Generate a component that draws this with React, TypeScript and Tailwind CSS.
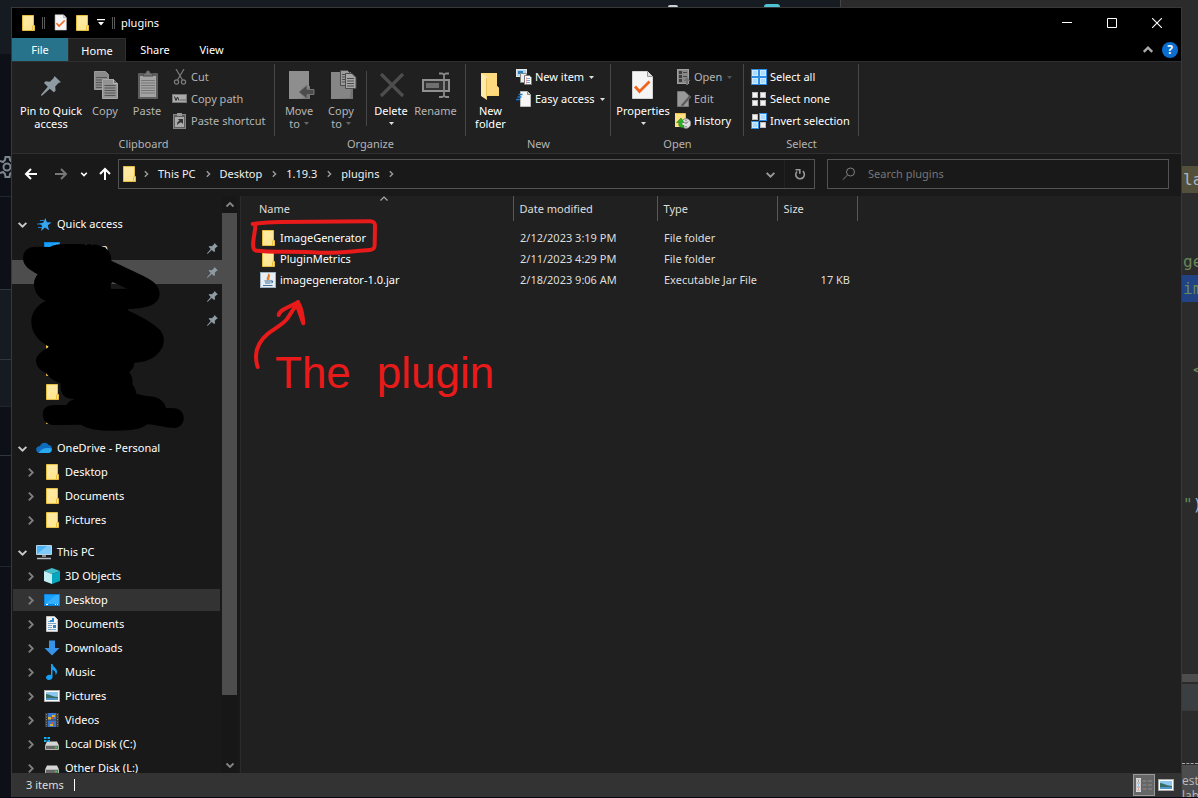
import type { ReactNode } from "react";

/* ---------- shared glyphs ---------- */

type Dir = "up" | "down" | "right";
const chevronPaths: Record<Dir, string> = {
  down: "M1.5 3.5 5 7l3.500-3.500",
  up: "M1.500 6.500 5 3l3.500 3.500",
  right: "M3.500 1.500 7 5l-3.500 3.500",
};

function Chevron({ dir, className, thick = 1.8 }: { dir: Dir; className: string; thick?: number }) {
  return (
    <svg viewBox="0 0 10 10" className={className} fill="none" stroke="currentColor" strokeWidth={thick} aria-hidden>
      <path d={chevronPaths[dir]} />
    </svg>
  );
}

function Caret({ className = "text-[#dedede]" }: { className?: string }) {
  return (
    <svg viewBox="0 0 5 3" className={`h-[3px] w-[5px] shrink-0 ${className}`} fill="currentColor" aria-hidden>
      <path d="M0 0h5L2.500 3z" />
    </svg>
  );
}

function Folder() {
  return (
    <svg viewBox="0 0 16 16" className="size-4 shrink-0" aria-hidden>
      <path d="M2.500.5h11v10h1v5h-12z" fill="#ffe694" stroke="#e8be42" />
      <path d="M3 1h10v5L3 13z" fill="#ffeba6" opacity=".6" />
      <path d="M12.500 15.500v-4.500l1.200-1" fill="none" stroke="#e8be42" />
    </svg>
  );
}

function Pin({ className }: { className: string }) {
  return (
    <svg viewBox="0 0 20 20" className={className} fill="#8f9ba3" aria-hidden>
      <path d="M13.500 0 20 6.300l-2.200.5-3.600 3.600.4 4.400-1.800 1.500-4-3.600L1.200 19.600 0 19.800l.2-1.300 6.600-7.700L3 7l1.600-1.700 4.300.4 3.800-3.600z" />
    </svg>
  );
}

function SheetLines({ x, y, w, n, color }: { x: number; y: number; w: number; n: number; color: string }) {
  return (
    <g stroke={color} strokeWidth="1">
      {Array.from({ length: n }, (_, i) => (
        <path key={i} d={`M${x} ${y + i * 2.5}h${w}`} />
      ))}
    </g>
  );
}

/* ---------- ribbon icons ---------- */

const CopyIcon = () => (
  <svg viewBox="0 0 32 32" className="size-8" aria-hidden>
    <path d="M5.500 1.500h11l3 3v15h-14z" fill="#8a8a8a" stroke="#9a9a9a" />
    <SheetLines x={7} y={7.500} w={11} n={5} color="#555" />
    <path d="M13.500 9.500h11l4 4v15h-15z" fill="#939393" stroke="#a8a8a8" />
    <path d="M24.500 9.500v4h4" fill="#666" stroke="#bbb" />
    <SheetLines x={15.500} y={15.500} w={11} n={5} color="#555" />
  </svg>
);

const PasteIcon = () => (
  <svg viewBox="0 0 32 32" className="size-8" aria-hidden>
    <rect x="7" y="3" width="20" height="26" rx="1" fill="#5e5e5e" />
    <rect x="9" y="6" width="16" height="21" fill="#a3a3a3" />
    <path d="M12 6V4l3-1c0-3 4-3 4 0l3 1v2z" fill="#777" stroke="#4a4a4a" />
    <SheetLines x={10} y={10.500} w={14} n={6} color="#777" />
  </svg>
);

const CutIcon = () => (
  <svg viewBox="0 0 16 16" className="size-4" fill="none" stroke="#7d7d7d" strokeWidth="1.200" aria-hidden>
    <path d="M4 0 10.500 11M12 0 5.500 11" />
    <circle cx="4.500" cy="13" r="2.100" />
    <circle cx="11.500" cy="13" r="2.100" />
  </svg>
);

const CopyPathIcon = () => (
  <svg viewBox="0 0 16 16" className="size-4" aria-hidden>
    <rect x=".5" y="3.500" width="14" height="8" fill="#aaa" stroke="#777" />
    <path d="m2.500 5.500 1.500 4L5.500 6 7 9.500" stroke="#222" fill="none" />
    <path d="M8.500 9h1m1 0h1m1 0h1" stroke="#222" />
  </svg>
);

const PasteShortcutIcon = () => (
  <svg viewBox="0 0 16 16" className="size-4" aria-hidden>
    <rect x="1.500" y="1.500" width="12" height="14" fill="#5e5e5e" stroke="#858585" />
    <rect x="3" y="4" width="9" height="10" fill="#aaa" />
    <rect x="5" y="0" width="5" height="3" fill="#999" />
    <path d="M5 12c0-3 1-4 2.500-4L6 6h5v5L9.500 9.500C8 9.500 7 10 5 12z" fill="#333" />
  </svg>
);

const MoveToIcon = () => (
  <svg viewBox="0 0 32 32" className="size-8" aria-hidden>
    <path d="M6 1h20v28H6z" fill="#8e8e8e" />
    <path d="M26 16h1v13H10l13-1z" fill="#777" />
    <path d="m16 22 8-7v4.500h7v5h-7V29z" fill="#4c4c4c" stroke="#767676" />
  </svg>
);

const CopyToIcon = () => (
  <svg viewBox="0 0 32 32" className="size-8" aria-hidden>
    <path d="M6 2h20v27H6z" fill="#858585" />
    <path d="M26 18h2v11H11l14-1z" fill="#737373" />
    <path d="M15.500.5h7l3 3v12h-10z" fill="#9b9b9b" stroke="#4c4c4c" />
    <path d="M20.500 3.500h6.500l4 4v11h-10.500z" fill="#a6a6a6" stroke="#4c4c4c" />
    <SheetLines x={22} y={8.500} w={7} n={4} color="#4c4c4c" />
    <SheetLines x={17} y={4.500} w={3} n={4} color="#4c4c4c" />
  </svg>
);

const DeleteIcon = () => (
  <svg viewBox="0 0 32 32" className="size-8" stroke="#4d4d4d" strokeWidth="3.200" aria-hidden>
    <path d="m6 4 22 22M28 4 6 26" />
  </svg>
);

const RenameIcon = () => (
  <svg viewBox="0 0 32 32" className="size-8" fill="none" aria-hidden>
    <rect x="3" y="10" width="26" height="11" fill="#333" stroke="#909090" strokeWidth="2" />
    <rect x="6" y="13" width="13" height="5" fill="#707070" />
    <path d="M19 3.500h3l2 1 2-1h3M24 4v22M19 27h3l2-1 2 1h3" stroke="#8a8a8a" strokeWidth="1.800" />
  </svg>
);

const NewFolderIcon = () => (
  <svg viewBox="0 0 32 32" className="size-8" aria-hidden>
    <path d="M6 3h16v13l2 2v8H6z" fill="#fcd56f" />
    <path d="M8 3h14v13l2 2v6l-16 2z" fill="#ffdb80" />
    <path d="m6 3 6 4v23l-6-4z" fill="#ffeaaa" />
    <path d="M11.500 8v21" stroke="#e5b94e" strokeWidth=".8" fill="none" />
  </svg>
);

const NewItemIcon = () => (
  <svg viewBox="0 0 16 16" className="size-4" aria-hidden>
    <rect x=".5" y=".5" width="10" height="7" fill="#a7d7f5" stroke="#e5e5e5" />
    <rect x="2" y="2" width="5" height="3" fill="#2b7cb8" />
    <path d="M4.500 4.500h6v9h-6z" fill="#eee" stroke="#888" />
    <path d="M8.500 6.500h5l2 2v7h-7z" fill="#fff" stroke="#777" />
    <path d="M10 9.500h4m-4 2h4m-4 2h4" stroke="#7ea6cf" />
    <path d="M10.500 8v7" stroke="#e9a0a0" strokeWidth=".7" />
  </svg>
);

const EasyAccessIcon = () => (
  <svg viewBox="0 0 16 16" className="size-4" aria-hidden>
    <path d="M4.500.5h7l3 3v12h-10z" fill="#f5f5f5" stroke="#bbb" />
    <path d="M11.500.5v3h3" fill="#ccc" stroke="#888" />
    <path d="M2.500 3.500h4m-5 2.500h4m-5.500 2.500h4" stroke="#1a79c9" strokeWidth="1.300" />
  </svg>
);

function PropertiesIcon({ className = "size-8" }: { className?: string }) {
  return (
    <svg viewBox="0 0 32 32" className={className} aria-hidden>
      <path d="M5.500 1.500h15l5 5v22h-20z" fill="#f5f5f5" stroke="#d4d4d4" />
      <path d="M20.500 1.500v5h5" fill="#ddd" stroke="#999" />
      <path d="m8 16.500 4.500 5L22.500 11.500" fill="none" stroke="#f1641e" strokeWidth="2.800" />
    </svg>
  );
}

const OpenIcon = () => (
  <svg viewBox="0 0 16 16" className="size-4" aria-hidden>
    <rect x="2.500" y=".5" width="11" height="14" fill="#888" stroke="#a0a0a0" />
    <path d="M4 2h3v3H4zm0 4h3v3H4zm0 4h3v3H4z" fill="#3d3d3d" />
    <path d="M8 3.500h4M8 7.500h4" stroke="#444" />
    <path d="m8.500 12 3.500-4 3.500 4H13v4h-2v-4z" fill="#707070" />
  </svg>
);

const EditIcon = () => (
  <svg viewBox="0 0 16 16" className="size-4" aria-hidden>
    <path d="M2.500.5h7l4 3.500v11.500h-11z" fill="#999" stroke="#777" />
    <path d="m14.500 4.500 1.500 1.500-7.500 8.500L6 16l.5-2.500z" fill="#565656" stroke="#7d7d7d" strokeWidth=".5" />
  </svg>
);

const HistoryIcon = () => (
  <svg viewBox="0 0 16 16" className="size-4" aria-hidden>
    <path d="M0 0h10v14H0z" fill="#ffe083" />
    <path d="M.5.5h10v6" stroke="#e7be4d" fill="none" />
    <circle cx="11" cy="10.500" r="4.800" fill="#dedede" stroke="#888" />
    <path d="m9.500 9 1.500 1.500L13 8.500M11 7v1m0 5v1" stroke="#555" fill="none" />
    <path d="M9 14.500C4 15 3 12 4 9.500H1.500L6 5l3 4.500H7c-.5 1.500 0 3 2 3z" fill="#2fae2c" stroke="#167a14" strokeWidth=".5" />
  </svg>
);

function SelectIcon({ on }: { on: boolean[] }) {
  const cells = [
    [0, 0],
    [8, 0],
    [0, 8],
    [8, 8],
  ];
  return (
    <svg viewBox="0 0 16 16" className="size-4" aria-hidden>
      {cells.map(([x, y], i) => (
        <g key={i}>
          {on[i] && <rect x={x} y={y} width="8" height="8" fill="#2f8de4" />}
          <rect x={x + 1.5} y={y + 1.5} width="5" height="5" fill={on[i] ? "#a9dcff" : "#f2f2f2"} stroke={on[i] ? "#cdeaff" : "#bcbcbc"} />
        </g>
      ))}
    </svg>
  );
}

/* ---------- ribbon building blocks ---------- */

function Group({ label, className, pad, children }: { label: string; className: string; pad: string; children: ReactNode }) {
  return (
    <section className={`relative flex flex-col pt-1 ${className}`}>
      <div className={`flex h-[66px] ${pad}`}>{children}</div>
      <h2 className="mt-1 text-center text-[#b4b4b4]">{label}</h2>
      <span className="absolute top-[2px] right-0 h-[72px] w-px bg-[#484848]" />
    </section>
  );
}

type Tone = "on" | "dim";

function BigButton({ icon, lines, width, tone = "on", caret }: { icon: ReactNode; lines: string[]; width: string; tone?: Tone; caret?: "inline" | "below" }) {
  return (
    <button className={`flex shrink-0 flex-col items-center pt-1 leading-[13px] whitespace-nowrap ${width} ${tone === "on" ? "text-white" : "text-[#b5b5b5]"}`}>
      <span className="mb-[2px] flex size-8 items-center justify-center">{icon}</span>
      {lines.map((l, i) => (
        <span key={l} className="flex items-center gap-1">
          {l}
          {caret === "inline" && i === lines.length - 1 && <Caret className="text-[#666]" />}
        </span>
      ))}
      {caret === "below" && (
        <span className="mt-[5px]">
          <Caret />
        </span>
      )}
    </button>
  );
}

function SmallButton({ icon, label, tone = "on", caret }: { icon: ReactNode; label: string; tone?: Tone; caret?: string }) {
  return (
    <button className={`flex h-[22px] items-center gap-[3px] whitespace-nowrap ${tone === "on" ? "text-white" : "text-[#b5b5b5]"}`}>
      {icon}
      <span>{label}</span>
      {caret && (
        <span className="ml-[2px]">
          <Caret className={caret} />
        </span>
      )}
    </button>
  );
}

function Ribbon() {
  return (
    <div className="flex h-[93px] shrink-0 border-y border-[#2f2f2f] bg-[#202020]">
      <Group label="Clipboard" className="w-[263px]" pad="pl-[6px]">
        <BigButton icon={<Pin className="size-5" />} lines={["Pin to Quick", "access"]} width="w-[66px]" />
        <BigButton icon={<CopyIcon />} lines={["Copy"]} width="w-[42px]" tone="dim" />
        <BigButton icon={<PasteIcon />} lines={["Paste"]} width="w-[42px]" tone="dim" />
        <div className="ml-1">
          <SmallButton icon={<CutIcon />} label="Cut" tone="dim" />
          <SmallButton icon={<CopyPathIcon />} label="Copy path" tone="dim" />
          <SmallButton icon={<PasteShortcutIcon />} label="Paste shortcut" tone="dim" />
        </div>
      </Group>
      <Group label="Organize" className="w-[191px]" pad="pl-[3px]">
        <BigButton icon={<MoveToIcon />} lines={["Move", "to"]} width="w-[42px]" tone="dim" caret="inline" />
        <BigButton icon={<CopyToIcon />} lines={["Copy", "to"]} width="w-[42px]" tone="dim" caret="inline" />
        <span className="mx-[4px] mt-[5px] h-[55px] w-px bg-[#484848]" />
        <BigButton icon={<DeleteIcon />} lines={["Delete"]} width="w-[40px]" caret="below" />
        <BigButton icon={<RenameIcon />} lines={["Rename"]} width="w-[49px]" tone="dim" />
      </Group>
      <Group label="New" className="w-[145px]" pad="pl-[3px]">
        <BigButton icon={<NewFolderIcon />} lines={["New", "folder"]} width="w-[43px]" />
        <div className="ml-1">
          <SmallButton icon={<NewItemIcon />} label="New item" caret="text-[#dedede]" />
          <SmallButton icon={<EasyAccessIcon />} label="Easy access" caret="text-[#dedede]" />
        </div>
      </Group>
      <Group label="Open" className="w-[133px]" pad="pl-[2px]">
        <BigButton icon={<PropertiesIcon />} lines={["Properties"]} width="w-[60px]" caret="below" />
        <div className="ml-[2px]">
          <SmallButton icon={<OpenIcon />} label="Open" tone="dim" caret="text-[#555]" />
          <SmallButton icon={<EditIcon />} label="Edit" tone="dim" />
          <SmallButton icon={<HistoryIcon />} label="History" />
        </div>
      </Group>
      <Group label="Select" className="w-[115px]" pad="pl-[7px]">
        <div>
          <SmallButton icon={<SelectIcon on={[true, true, true, true]} />} label="Select all" />
          <SmallButton icon={<SelectIcon on={[false, false, false, false]} />} label="Select none" />
          <SmallButton icon={<SelectIcon on={[false, true, true, false]} />} label="Invert selection" />
        </div>
      </Group>
    </div>
  );
}

/* ---------- title bar and tabs ---------- */

function TitleBar() {
  return (
    <header className="flex h-[30px] shrink-0 items-center bg-black pr-px pl-2 text-white">
      <Folder />
      <span className="ml-[6px] h-3 w-[3px] border-x border-[#5a5a5a]" />
      <button aria-label="Properties" className="ml-[7px]">
        <PropertiesIcon className="size-[18px]" />
      </button>
      <button aria-label="New folder" className="ml-[4px]">
        <Folder />
      </button>
      <button aria-label="Customize Quick Access Toolbar" className="ml-[6px] flex size-[9px] flex-col items-center">
        <svg viewBox="0 0 8 7" className="h-[7px] w-2" fill="currentColor" aria-hidden>
          <path d="M0 0h8v1.200H0zM1 3h6L4 6.500z" />
        </svg>
      </button>
      <span className="ml-[7px] h-3 w-[3px] border-x border-[#5a5a5a]" />
      <h1 className="ml-[6px]">plugins</h1>
      <div className="ml-auto flex">
        <button aria-label="Minimize" className="flex h-[30px] w-[45px] items-center justify-center">
          <svg viewBox="0 0 10 10" className="size-[10px]" stroke="#fff" aria-hidden>
            <path d="M0 4.500h10" />
          </svg>
        </button>
        <button aria-label="Maximize" className="flex h-[30px] w-[45px] items-center justify-center">
          <svg viewBox="0 0 10 10" className="size-[10px]" stroke="#fff" fill="none" aria-hidden>
            <path d="M.5.5h9v9h-9z" />
          </svg>
        </button>
        <button aria-label="Close" className="flex h-[30px] w-[46px] items-center justify-center">
          <svg viewBox="0 0 10 10" className="size-[10px]" stroke="#fff" strokeWidth="1.100" aria-hidden>
            <path d="m0 0 10 10M10 0 0 10" />
          </svg>
        </button>
      </div>
    </header>
  );
}

function Tabs() {
  return (
    <nav className="flex h-[23px] shrink-0 items-stretch bg-black text-white">
      <button className="w-14 bg-[#27738b]">File</button>
      <button className="-mb-px w-[58px] border-x border-t border-[#2f2f2f] bg-[#202020]">Home</button>
      <button className="w-[58px]">Share</button>
      <button className="w-[55px]">View</button>
      <div className="ml-auto flex items-center gap-2 pr-[3px]">
        <button aria-label="Minimize the Ribbon">
          <Chevron dir="up" className="size-3 text-[#aaa]" thick={2} />
        </button>
        <button aria-label="Help" className="size-4 rounded-full bg-[#0a6fd0] text-[12px] leading-4 font-bold">
          ?
        </button>
      </div>
    </nav>
  );
}

/* ---------- address row ---------- */

function Arrow({ d, color }: { d: string; color: string }) {
  return (
    <svg viewBox="0 0 14 14" className="size-[14px]" fill="none" stroke={color} strokeWidth="2" aria-hidden>
      <path d={d} />
    </svg>
  );
}

function AddressRow() {
  return (
    <div className="flex h-[42px] shrink-0 items-start bg-[#191919] pt-[5px] pr-3">
      <div className="flex h-[30px] w-[106px] shrink-0 items-center pl-3">
        <button aria-label="Back">
          <Arrow d="M13 7H2m5-5L2 7l5 5" color="#fff" />
        </button>
        <button aria-label="Forward" className="ml-4">
          <Arrow d="M1 7h11M7 2l5 5-5 5" color="#777" />
        </button>
        <button aria-label="Recent locations" className="ml-3">
          <Chevron dir="down" className="size-2 text-white" thick={2} />
        </button>
        <button aria-label="Up" className="ml-[10px]">
          <Arrow d="M7 13V2M2 7l5-5 5 5" color="#fff" />
        </button>
      </div>
      <div className="flex h-[30px] min-w-0 flex-1 items-center border border-[#535353] pl-[2px] text-[#f0f0f0]">
        <Folder />
        <ol className="-ml-[3px] flex">
          {["This PC", "Desktop", "1.19.3", "plugins"].map((c) => (
            <li key={c} className="flex items-center">
              <Chevron dir="right" className="mx-2 size-2 text-[#999]" />
              <button>{c}</button>
            </li>
          ))}
        </ol>
        <Chevron dir="right" className="ml-2 size-2 text-[#999]" />
        <button aria-label="Previous locations" className="ml-auto flex w-7 justify-center">
          <Chevron dir="down" className="size-[11px] text-[#999]" />
        </button>
        <button aria-label="Refresh" className="flex h-full w-[30px] items-center justify-center border-l border-[#222]">
          <svg viewBox="0 0 12 12" className="size-3" fill="none" stroke="#999" strokeWidth="1.600" aria-hidden>
            <path d="M8.800 3.200A4.300 4.300 0 1 1 3 3.500" />
            <path d="M1.500 1.800h4.300v4" />
          </svg>
        </button>
      </div>
      <label className="ml-3 flex h-[30px] w-[342px] shrink-0 items-center border border-[#535353] pl-[14px]">
        <svg viewBox="0 0 14 14" className="size-[14px]" fill="none" stroke="#808080" aria-hidden>
          <circle cx="8.500" cy="5" r="4" />
          <path d="M5.500 8 .8 12.700" />
        </svg>
        <input aria-label="Search plugins" placeholder="Search plugins" className="ml-3 min-w-0 flex-1 bg-transparent outline-none placeholder:text-[#767676]" />
      </label>
    </div>
  );
}

/* ---------- navigation pane ---------- */

const ico = "size-4 shrink-0";

const StarIcon = () => (
  <svg viewBox="0 0 16 16" className={ico} aria-hidden>
    <path d="m9.500 2 1.300 4.200 4.700.3-3.700 2.800 1.200 5L9 11.500 5 15l1.300-5L3 7.300l4.200-.5z" fill="#35a8f4" />
    <path d="M4 4.500h4M1 8h5M2 11.500h4" stroke="#1c7fd0" />
  </svg>
);
const DesktopIcon = () => (
  <svg viewBox="0 0 16 16" className={ico} aria-hidden>
    <rect y="2" width="16" height="12" fill="#0b84e0" />
    <path d="M1 3h14v9H1z" fill="#18a0fb" />
    <path d="M1 12 12 3h3v9z" fill="#35b0ff" />
    <path d="M2 12.500h2m7 0h1m1 0h1" stroke="#fff" />
  </svg>
);
const CloudIcon = () => (
  <svg viewBox="0 0 16 16" className={ico} aria-hidden>
    <path d="M4 6c1-4 7-4.500 8.500-1 2.500 0 3.500 2 3.500 4 0 3-2 4-4 4H4C1 13-.3 10.500.3 8.500.8 7 2.500 6 4 6z" fill="#0f6cbd" />
    <path d="M2.500 13C5 9 9 7 15.500 8.500 16.500 11 14.500 13 12 13z" fill="#29a8ee" />
  </svg>
);
const PcIcon = () => (
  <svg viewBox="0 0 16 16" className={ico} aria-hidden>
    <path d="M.5 1.500h15v9H.5z" fill="#49b1f5" stroke="#b9d5e5" />
    <path d="M1 10 11 2h4v8z" fill="#80cafa" />
    <path d="M6 11h4v2H6z" fill="#888" />
    <path d="M1 14.500h14" stroke="#b5bec4" strokeWidth="1.500" />
  </svg>
);
const CubeIcon = () => (
  <svg viewBox="0 0 16 16" className={ico} aria-hidden>
    <path d="m8 0 8 3-8 3-8-3z" fill="#42bcca" />
    <path d="m0 3 8 3v10l-8-3z" fill="#c1eff4" />
    <path d="m16 3-8 3v10l8-3z" fill="#06a6bf" />
  </svg>
);
const DocumentIcon = () => (
  <svg viewBox="0 0 16 16" className={ico} aria-hidden>
    <path d="M2.500.5h8l3 3v12h-11z" fill="#f4f4f4" stroke="#c2c2c2" />
    <path d="M4 5.500h2M4 7.500h8m-8 2h4m-4 2h4m-4 2h8" stroke="#7ba7c9" />
    <path d="M6 4h2v2H6zm2-2h2v4H8zm1 7h3v3H9z" fill="#2b88d0" />
  </svg>
);
const DownloadIcon = () => (
  <svg viewBox="0 0 16 16" className={ico} aria-hidden>
    <path d="M5 .5h6V8h4.500L8 15.500.5 8H5z" fill="#3694e8" />
  </svg>
);
const MusicIcon = () => (
  <svg viewBox="0 0 16 16" className={ico} aria-hidden>
    <path d="M7 0h1.500c.3 3 4.500 4 4.500 7.500 0 1.500-.5 2.500-1.500 3.500.5-3-1-4.500-3-5v7c0 2-1.700 3-3.500 3S2 15 2 13.600C2 11.500 5 10 7 11z" fill="#16a0f8" />
  </svg>
);
const PictureIcon = () => (
  <svg viewBox="0 0 16 16" className={ico} aria-hidden>
    <rect x=".5" y="2.500" width="15" height="11" fill="#fff" stroke="#aaa" />
    <path d="M2 4h12v8H2z" fill="#8cc7f0" />
    <path d="M2 6c4 0 6 3 12 3v3H2z" fill="#386d62" />
    <path d="M2 10h12v2H2z" fill="#5196c8" />
  </svg>
);
const VideoIcon = () => (
  <svg viewBox="0 0 16 16" className={ico} aria-hidden>
    <path d="M1 1h14v14H1z" fill="#3c3c3c" />
    <path d="M4 1h8v6.500H4zM4 8.500h8V15H4z" fill="#3a76d0" />
    <path d="M4 5h3v2.500H4zm2 7h3v2H6z" fill="#d4b23c" />
    <path d="M8 3h3v2H8z" fill="#d4b23c" />
    <path d="M7 5h2v2H7zm1 5h2v2H8z" fill="#d3503d" />
    <path d="M2.500 2v13m11-13v13" stroke="#8a8a8a" strokeDasharray="1 1.500" />
  </svg>
);
function DiskIcon({ win }: { win?: boolean }) {
  return (
    <svg viewBox="0 0 16 16" className={ico} aria-hidden>
      <path d="M3 5.500h10l2 4H1z" fill="#d5d5d5" />
      <path d="M1.500 9.500h13v4h-13z" fill="#686868" stroke="#b5b5b5" />
      <path d="M11 11.500h2" stroke="#37d33a" strokeWidth="1.500" />
      {win && <path d="M0 1h2.500v2H0zm3.500 0H6v2H3.500zM0 4h2.500v2H0zm3.500 0H6v2H3.500z" fill="#14b0f3" />}
    </svg>
  );
}

type Row = { label?: string; icon?: ReactNode; root?: boolean; pinned?: boolean; state?: "active" | "current"; leaf?: boolean };

const quick: Row[] = [
  { label: "Quick access", icon: <StarIcon />, root: true },
  { label: "Desktop", icon: <DesktopIcon />, pinned: true, leaf: true },
  { pinned: true, state: "active", leaf: true },
  { pinned: true, leaf: true },
  { pinned: true, leaf: true },
  { icon: <Folder />, leaf: true },
  { icon: <Folder />, leaf: true },
  { icon: <Folder />, leaf: true },
  { icon: <Folder />, leaf: true },
];
const oneDrive: Row[] = [
  { label: "OneDrive - Personal", icon: <CloudIcon />, root: true },
  { label: "Desktop", icon: <Folder /> },
  { label: "Documents", icon: <Folder /> },
  { label: "Pictures", icon: <Folder /> },
];
const thisPc: Row[] = [
  { label: "This PC", icon: <PcIcon />, root: true },
  { label: "3D Objects", icon: <CubeIcon /> },
  { label: "Desktop", icon: <DesktopIcon />, state: "current" },
  { label: "Documents", icon: <DocumentIcon /> },
  { label: "Downloads", icon: <DownloadIcon /> },
  { label: "Music", icon: <MusicIcon /> },
  { label: "Pictures", icon: <PictureIcon /> },
  { label: "Videos", icon: <VideoIcon /> },
  { label: "Local Disk (C:)", icon: <DiskIcon win /> },
  { label: "Other Disk (L:)", icon: <DiskIcon /> },
];

function TreeRow({ row }: { row: Row }) {
  const fill = row.state === "active" ? "bg-[#4d4d4d]" : row.state === "current" ? "bg-[#333] bg-clip-content py-px pr-[2px] pl-px" : "pl-px";
  return (
    <li className={`h-6 ${fill}`}>
      <div className={`flex h-full items-center ${row.root ? "pl-1" : row.state === "active" ? "pl-[13px]" : "pl-3"}`}>
        <span className="flex w-[11px] shrink-0 justify-center">
          {row.leaf ? null : row.root ? (
            <Chevron dir="down" className="size-[11px] text-[#c8c8c8]" />
          ) : (
            <Chevron dir="right" className="size-[11px] text-[#7c7c7c]" />
          )}
        </span>
        <span className="mr-[5px] ml-2 size-4 shrink-0">{row.icon}</span>
        <span className="whitespace-nowrap text-white">{row.label}</span>
        {row.pinned && <Pin className="mr-1 ml-auto size-[11px]" />}
      </div>
    </li>
  );
}

function NavigationPane() {
  return (
    <aside className="relative flex w-[229px] shrink-0 overflow-hidden border-r border-[#2b2b2b] bg-[#191919]">
      <div className="min-w-0 flex-1 space-y-2 pt-4">
        {[quick, oneDrive, thisPc].map((rows, i) => (
          <ul key={i}>
            {rows.map((r, j) => (
              <TreeRow key={j} row={r} />
            ))}
          </ul>
        ))}
      </div>
      <div className="mr-[3px] flex w-[15px] shrink-0 flex-col items-center bg-[#171717]">
        <span className="flex h-[17px] shrink-0 items-center">
          <Chevron dir="up" className="size-[10px] text-[#868686]" />
        </span>
        <span className="w-full grow-[482] bg-[#4d4d4d]" />
        <span className="grow-[62]" />
        <span className="flex h-4 shrink-0 items-center">
          <Chevron dir="down" className="size-[10px] text-[#868686]" />
        </span>
      </div>
      <svg viewBox="36 0 540 720" className="absolute top-1 left-0 h-60 w-[180px]" aria-hidden>
        <path
          fillRule="evenodd"
          d="M69 175C70 150 85 140 110 140L150 141C165 130 200 132 270 133C310 133 335 150 334 182C380 205 430 225 455 242C485 262 488 300 455 315C430 326 405 326 382 327C384 332 390 335 395 337C430 352 465 375 480 390C497 410 494 435 480 453C465 475 435 488 403 488C403 500 395 510 387 517C395 525 400 540 397 553C403 560 408 570 409 581C425 586 445 588 460 590C480 593 495 608 498 624L525 625C560 630 560 680 525 684C500 684 470 675 442 673C420 690 390 693 320 692C285 690 260 685 243 674L160 675C125 675 120 630 140 620C155 613 175 616 200 615C203 606 215 600 224 597C200 598 180 590 181 550C165 545 145 530 137 518C110 510 100 480 115 465C125 452 140 446 146 440C110 420 93 395 94 362C95 335 115 312 138 303C115 295 102 275 102 250C102 240 107 230 113 223C90 210 70 200 69 175ZM338 246L381 266L334 267C330 260 332 250 338 246Z"
        />
      </svg>
    </aside>
  );
}

/* ---------- file list ---------- */

const JarIcon = () => (
  <svg viewBox="0 0 16 16" className={ico} aria-hidden>
    <rect x=".5" y=".5" width="15" height="15" fill="#e8eef4" stroke="#9fb3c4" />
    <path d="M8 8C5.500 6 9.500 5 8.500 2 11 4.500 7.500 5.500 9 8" fill="none" stroke="#e8812c" strokeWidth="1.400" />
    <path d="M4.500 9h6.500m-6 2h5.500M3 13.500h9.500M11 9c2-.5 2 1.500.3 2" fill="none" stroke="#3f6f96" strokeWidth="1.200" />
  </svg>
);

const files = [
  { name: "ImageGenerator", icon: <Folder />, date: "2/12/2023 3:19 PM", type: "File folder", size: "" },
  { name: "PluginMetrics", icon: <Folder />, date: "2/11/2023 4:29 PM", type: "File folder", size: "" },
  { name: "imagegenerator-1.0.jar", icon: <JarIcon />, date: "2/18/2023 9:06 AM", type: "Executable Jar File", size: "17 KB" },
];

const columns = [
  { label: "Name", className: "w-[272px] pl-[18px]" },
  { label: "Date modified", className: "w-[144px] pl-[6px]" },
  { label: "Type", className: "w-[120px] pl-[6px]" },
  { label: "Size", className: "w-[80px] pl-[6px]" },
];

function FileList() {
  return (
    <main className="relative min-w-0 flex-1 overflow-hidden bg-[#202020] text-[#dedede]">
      <table className="w-[616px] table-fixed border-collapse whitespace-nowrap">
        <thead>
          <tr>
            {columns.map((c) => (
              <th key={c.label} scope="col" className={`relative h-[25px] border-r border-[#585858] p-0 text-left font-normal ${c.className}`}>
                {c.label}
                {c.label === "Name" && <Chevron dir="up" thick={1.2} className="absolute top-[-2px] left-[138px] size-[10px] text-[#aaa]" />}
              </th>
            ))}
          </tr>
        </thead>
        <tbody className="before:block before:h-[6px]">
          {files.map((f) => (
            <tr key={f.name} className="h-[21px]">
              <td className="p-0 pl-[19px] text-white">
                <span className="flex items-center gap-1">
                  {f.icon}
                  {f.name}
                </span>
              </td>
              <td className="p-0 pl-[7px]">{f.date}</td>
              <td className="p-0 pl-[7px]">{f.type}</td>
              <td className="p-0 pr-[7px] text-right">{f.size}</td>
            </tr>
          ))}
        </tbody>
      </table>

      <svg viewBox="3 18 837 702" className="absolute top-0 left-0 h-[234px] w-[279px]" fill="none" stroke="#e81a1a" strokeWidth="12" strokeLinecap="round" strokeLinejoin="round" aria-hidden>
        <path d="M38 102C60 99 80 96 120 96L390 94C402 94 405 98 405 108L404 165C404 175 400 179 388 180C340 183 290 190 240 188C190 184 150 185 110 185C80 185 60 183 48 182C38 178 38 165 41 145C43 130 46 120 46 106" />
        <path d="M53 531C40 490 55 455 85 430C110 412 130 402 142 386C155 365 165 350 174 336" />
        <path d="M116 375C118 360 140 354 174 337C183 350 188 370 190 400L173 352" />
      </svg>
      <p className="absolute top-[155px] left-[34px] flex gap-[26px] font-['Liberation_Sans',Arial,sans-serif] text-[44px] leading-none text-[#e81a1a]">
        <span>The</span>
        <span>plugin</span>
      </p>
    </main>
  );
}

/* ---------- status bar ---------- */

function StatusBar() {
  return (
    <footer className="flex h-6 shrink-0 items-center bg-[#333] pr-[7px] pl-[14px] text-[#dedede]">
      <span>3 items</span>
      <span className="ml-[10px] h-3 w-px bg-white" />
      <button aria-label="Details view" className="ml-auto flex h-[22px] w-[22px] items-center justify-center border border-[#999] bg-[#666]">
        <svg viewBox="0 0 16 14" className="h-[14px] w-4" aria-hidden>
          <path d="M0 0h5v14H0z" fill="#ddd" />
          <path d="M1 1.500h3v3H1zm0 4h3v3H1zm0 4h3v3H1z" fill="#fff" stroke="#999" strokeWidth=".5" />
          <path d="M2 2.500h1v1H2z" fill="#333" />
          <path d="M2 6.500h1v1H2z" fill="#1f7fe0" />
          <path d="M2 10.500h1v1H2z" fill="#d0311f" />
          <path d="M6.500 3h4m1.500 0h4M6.500 7h4M12 7h4M6.500 11h4m1.500 0h4" stroke="#8d8d8d" />
        </svg>
      </button>
      <button aria-label="Large icons view" className="ml-[3px]">
        <PictureIcon />
      </button>
    </footer>
  );
}

/* ---------- what shows behind the window ---------- */

function LeftBackdrop() {
  return (
    <div className="flex w-[11px] shrink-0 flex-col overflow-hidden bg-[#0d1117]">
      <div className="h-[47px] shrink-0 bg-[#161b22]" />
      <div className="flex h-[143px] shrink-0 items-end border-b border-[#21262d] pb-[18px]">
        <svg viewBox="9 0 11 22" className="h-[22px] w-[11px]" fill="none" stroke="#7d858f" strokeWidth="2" aria-hidden>
          <circle cx="16" cy="11" r="3.500" />
          <path d="M9 5l3 1 2-2 .5-3h4l.5 3 2 2M9 17l3-1 2 2 .5 3h4l.5-3 2-2" />
        </svg>
      </div>
      <div className="h-[93px] shrink-0 border-b border-[#30363d]" />
      <div className="h-[70px] shrink-0 border-b border-[#30363d] bg-[#161b22]" />
      <div className="h-[47px] shrink-0 border-b border-[#21262d] bg-[#161b22]" />
      <div className="h-[49px] shrink-0 border-b border-[#30363d]" />
      <div className="h-[111px] shrink-0 border-b border-[#21262d]" />
    </div>
  );
}

function RightBackdrop() {
  return (
    <div className="flex w-4 shrink-0 flex-col overflow-hidden bg-[#2b2b2b] font-['DejaVu_Sans_Mono',monospace] text-[16px] leading-[27px] whitespace-nowrap text-[#6a8759]">
      <div className="mt-[159px] shrink-0 bg-[#52503a] pl-px text-[#a9b7c6]">la</div>
      <div className="mt-[55px] shrink-0 pl-px">ge</div>
      <div className="shrink-0 bg-[#214283] pl-px">im</div>
      <div className="mt-[54px] shrink-0 pl-[11px]">&lt;</div>
      <div className="mt-[108px] shrink-0 pl-px">
        "<span className="text-[#a9b7c6]">)</span>
      </div>
      <div className="mt-[156px] h-2 shrink-0 bg-[#4d4d4d]" />
      <div className="mt-[2px] h-[27px] shrink-0 border-b border-[#383838] bg-[#3c3f41]" />
      <div className="mt-[52px] shrink-0 border-t border-dashed border-[#aaa]" />
      <div className="mt-px flex-1 bg-[#4b4d4f] pt-2 font-['Open_Sans',sans-serif] text-[12px] leading-[15px] text-[#bbb]">
        este
        <br />
        lable
      </div>
    </div>
  );
}

export default function App() {
  return (
    <div className="flex h-screen flex-col overflow-hidden bg-[#0d1117] font-['Noto_Sans','Segoe_UI',sans-serif] text-[11px] leading-[16px]">
      <div className="flex h-[7px] shrink-0 items-end bg-[#161b22]">
        <div className="flex h-full w-[841px] items-end justify-end gap-[86px] overflow-hidden border-r border-[#444] pr-[60px]">
          <span className="h-[2px] w-[10px] rounded-t-full bg-[#c9d1d9]" />
          <span className="h-[3px] w-[16px] rounded-t-full bg-[#4fc3d4]" />
        </div>
        <div className="h-full flex-1 bg-[#2b2b2b]" />
      </div>
      <div className="flex min-h-0 flex-1">
        <LeftBackdrop />
        <div className="flex min-w-0 flex-1 flex-col border-x border-t border-[#383838] bg-[#191919]">
          <TitleBar />
          <Tabs />
          <Ribbon />
          <AddressRow />
          <div className="flex min-h-0 flex-1">
            <NavigationPane />
            <FileList />
          </div>
          <StatusBar />
        </div>
        <RightBackdrop />
      </div>
      <div className="h-px shrink-0 bg-[#0b0510]" />
    </div>
  );
}
